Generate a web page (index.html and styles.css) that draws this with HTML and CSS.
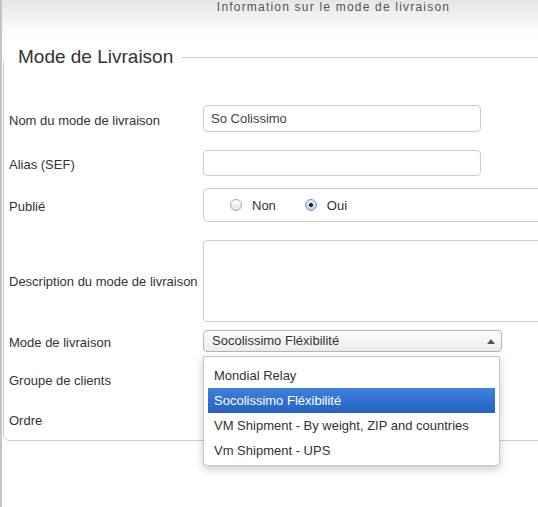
FILE: index.html
```html
<!DOCTYPE html>
<html lang="fr">
<head>
<meta charset="utf-8">
<link rel="stylesheet" href="styles.css">
</head>
<body>
<div class="page">
  <div class="topbar">Information sur le mode de livraison</div>
  <fieldset class="box">
    <legend class="legend">Mode de Livraison</legend>
    <div class="row r1">
      <label class="lbl low">Nom du mode de livraison</label>
      <div class="input">So Colissimo</div>
    </div>
    <div class="row r2">
      <label class="lbl low">Alias (SEF)</label>
      <div class="input"></div>
    </div>
    <div class="row r3">
      <label class="lbl low">Publié</label>
      <div class="radios">
        <span class="radio"></span><span class="rtext">Non</span>
        <span class="radio on"></span><span class="rtext">Oui</span>
      </div>
    </div>
    <div class="row r4">
      <label class="lbl">Description du mode de livraison</label>
      <div class="textarea"></div>
    </div>
    <div class="row r5">
      <label class="lbl low">Mode de livraison</label>
      <div class="select">
        <span>Socolissimo Fléxibilité</span>
        <span class="arrow"></span>
        <ul class="menu">
          <li>Mondial Relay</li>
          <li class="sel">Socolissimo Fléxibilité</li>
          <li>VM Shipment - By weight, ZIP and countries</li>
          <li>Vm Shipment - UPS</li>
        </ul>
      </div>
    </div>
    <div class="row r6">
      <label class="lbl">Groupe de clients</label>
    </div>
    <div class="row r7">
      <label class="lbl">Ordre</label>
    </div>
  </fieldset>
</div>
</body>
</html>
```

FILE: styles.css
```css
html, body {
  margin: 0;
  padding: 0;
  background: #fff;
  overflow: hidden;
}
body {
  font-family: "Liberation Sans", Arial, sans-serif;
  font-size: 13px;
  color: #333;
}
.page {
  border-left: 2px solid #c4c4c4;
  min-height: 507px;
  box-sizing: border-box;
  width: 538px;
  overflow: hidden;
}
.topbar {
  height: 36px;
  background: linear-gradient(#e6e6e6, #ffffff);
  text-align: center;
  padding-left: 127px;
  box-sizing: border-box;
  font-size: 12px;
  letter-spacing: 1.2px;
  color: #555;
  line-height: 15px;
}
.box {
  margin: 9px -30px 0 1px;
  border: 1px solid #ccc;
  border-radius: 6px;
  padding: 0 0 0 5px;
  height: 396px;
  box-sizing: border-box;
  position: relative;
}
.legend {
  font-size: 19px;
  color: #333;
  padding: 0 9px 0 14px;
  margin-left: -5px;
  line-height: 24px;
}
.row {
  display: flex;
  align-items: center;
}
.lbl {
  width: 194px;
  flex: none;
  white-space: nowrap;
}
.lbl.low {
  padding-top: 3px;
}
.r1 { margin-top: 36px; height: 27px; }
.r2 { margin-top: 18px; height: 26px; }
.r3 { margin-top: 12px; height: 34px; }
.r4 { margin-top: 18px; height: 82px; }
.r5 { margin-top: 8px; height: 22px; }
.r6 { margin-top: 17px; height: 22px; }
.r7 { margin-top: 18px; height: 22px; }
.input {
  width: 278px;
  height: 27px;
  box-sizing: border-box;
  border: 1px solid #ccc;
  border-radius: 4px;
  padding: 0 7px;
  line-height: 25px;
  color: #444;
}
.r2 .input { height: 26px; }
.radios {
  width: 360px;
  height: 34px;
  box-sizing: border-box;
  border: 1px solid #ccc;
  border-radius: 5px;
  display: flex;
  align-items: center;
  padding-left: 26px;
}
.radio {
  width: 12px;
  height: 12px;
  border-radius: 50%;
  border: 1px solid #a9a9a9;
  background: linear-gradient(#fff, #e4e4e4);
  box-sizing: border-box;
  margin-right: 10px;
}
.radio.on {
  border-color: #7a9cc6;
  background: radial-gradient(circle, #222 0 1.6px, transparent 2.2px), linear-gradient(#dde9f8, #b9d0ee);
}
.rtext {
  margin-right: 29px;
}
.textarea {
  width: 360px;
  height: 82px;
  box-sizing: border-box;
  border: 1px solid #ccc;
  border-radius: 4px;
}
.select {
  width: 299px;
  height: 22px;
  box-sizing: border-box;
  border: 1px solid #b5b5b5;
  border-radius: 4px;
  background: linear-gradient(#fdfdfd, #ececec);
  padding: 0 8px;
  line-height: 20px;
  display: flex;
  justify-content: space-between;
  align-items: center;
  position: relative;
  color: #333;
}
.arrow {
  width: 0;
  height: 0;
  border-left: 4px solid transparent;
  border-right: 4px solid transparent;
  border-bottom: 5px solid #555;
  margin-right: -2px;
}
.menu {
  position: absolute;
  left: -1px;
  top: 25px;
  width: 297px;
  height: 110px;
  box-sizing: border-box;
  margin: 0;
  padding: 6px 4px;
  list-style: none;
  background: #fff;
  border: 1px solid #c8c8c8;
  border-radius: 0 0 4px 4px;
  box-shadow: 0 3px 8px rgba(0,0,0,0.22);
  z-index: 5;
}
.menu li {
  height: 25px;
  line-height: 25px;
  padding-left: 6px;
  color: #333;
  white-space: nowrap;
}
.menu li.sel {
  background: linear-gradient(#3f82df, #2660bd);
  color: #fff;
}
```
